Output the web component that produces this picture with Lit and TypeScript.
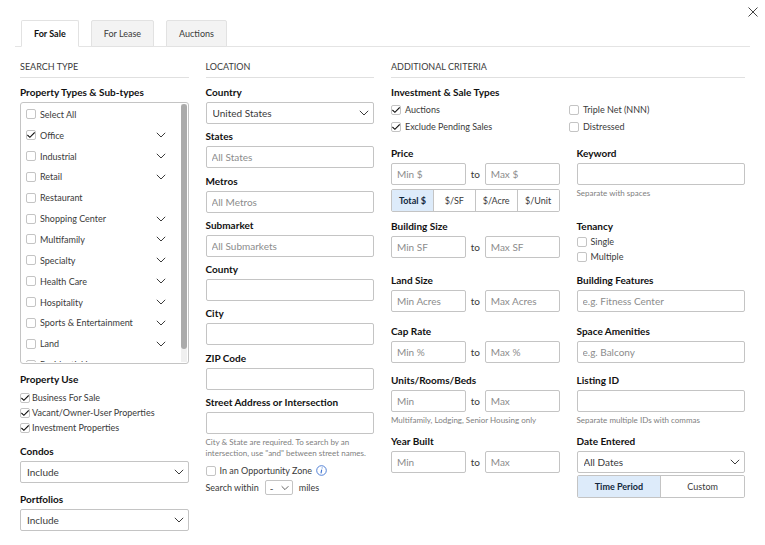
import { LitElement, html, css, svg, nothing } from "lit";
import { customElement, property } from "lit/decorators.js";

const base = css`
  * { box-sizing: border-box; }
  input, select, button { font: inherit; color: inherit; margin: 0; }
  .label { display: block; font-size: 10px; font-weight: 700; color: #111; line-height: 16px; }
  .help { margin: 0; padding-top: 1px; font-size: 8px; line-height: 11px; color: #808080; white-space: pre-line; }
  .control {
    display: block; width: 100%; min-width: 0; height: 22px; padding: 0 5px; font-size: 10px;
    border: 1px solid #c4c4c4; border-radius: 2px; background: #fff; outline: none;
  }
  .control::placeholder { color: #8c8c8c; opacity: 1; }
  .stack { display: flex; flex-direction: column; gap: 2px; }
`;

const chevron = (width = 10) => html`<svg class="chevron" width=${width} height="6" viewBox="0 0 10 6" fill="none"
  stroke="#3c3c3c" stroke-width="1" aria-hidden="true">${svg`<path d="M0.8 0.8L5 5L9.2 0.8" />`}</svg>`;

@customElement("check-box")
export class CheckBox extends LitElement {
  @property() label = "";
  @property({ type: Boolean }) checked = false;
  @property({ type: Boolean, reflect: true }) tight = false;
  static styles = [base, css`
    :host { display: block; min-width: 0; }
    .row { display: flex; align-items: center; gap: 4px; white-space: nowrap; line-height: 15px; }
    :host([tight]) .row { gap: 2px; }
    .box {
      appearance: none; flex: none; width: 10px; height: 10px;
      border: 1px solid #c4c4c4; border-radius: 2px; background: #fff;
    }
    .box:checked {
      background: #fff url("data:image/svg+xml,%3Csvg xmlns='http://www.w3.org/2000/svg' viewBox='0 0 8 8'%3E%3Cpath d='M0.4 4L2.9 6.3L7.7 1.4' fill='none' stroke='%23111' stroke-width='1.1'/%3E%3C/svg%3E") center / 8px 8px no-repeat;
    }
  `];
  render() {
    return html`<label class="row"><input class="box" type="checkbox" .checked=${this.checked} />${this.label}</label>`;
  }
}

@customElement("text-field")
export class TextField extends LitElement {
  @property() label = "";
  @property() hint = "";
  @property() help = "";
  static styles = [base, css`:host { display: block; }`];
  render() {
    return html`<div class="stack">
      <label class="label" for="f">${this.label}</label>
      <input class="control" id="f" type="text" placeholder=${this.hint} />
      ${this.help ? html`<p class="help">${this.help}</p>` : nothing}
    </div>`;
  }
}

@customElement("select-field")
export class SelectField extends LitElement {
  @property() label = "";
  @property() value = "";
  static styles = [base, css`
    :host { display: block; }
    .wrap { position: relative; }
    .control { appearance: none; padding: 0 20px 0 6px; }
    .chevron { position: absolute; right: 5px; top: 8px; pointer-events: none; }
  `];
  render() {
    return html`<div class="stack">
      <label class="label" for="f">${this.label}</label>
      <div class="wrap">
        <select class="control" id="f"><option>${this.value}</option></select>${chevron()}
      </div>
    </div>`;
  }
}

@customElement("range-field")
export class RangeField extends LitElement {
  @property() label = "";
  @property() unit = "";
  @property() help = "";
  static styles = [base, css`
    :host { display: block; }
    .pair { display: grid; grid-template-columns: 1fr 19px 1fr; align-items: center; }
    .to { text-align: center; font-size: 10px; }
  `];
  render() {
    const min = `Min ${this.unit}`.trim();
    const max = `Max ${this.unit}`.trim();
    return html`<div class="stack" role="group" aria-labelledby="l">
      <span class="label" id="l">${this.label}</span>
      <div class="pair">
        <input class="control" type="text" aria-label="${this.label} minimum" placeholder=${min} />
        <span class="to">to</span>
        <input class="control" type="text" aria-label="${this.label} maximum" placeholder=${max} />
      </div>
      ${this.help ? html`<p class="help">${this.help}</p>` : nothing}
    </div>`;
  }
}

@customElement("segment-bar")
export class SegmentBar extends LitElement {
  @property({ attribute: false }) items: string[] = [];
  static styles = [base, css`
    :host { display: block; }
    .bar { display: flex; height: 23px; border: 1px solid #c4c4c4; border-radius: 2px; overflow: hidden; }
    .seg { flex: 1 1 0; min-width: 0; padding: 0; border: 0; background: #fff; }
    .seg + .seg { border-left: 1px solid #c4c4c4; }
    .on { background: #ddebfa; font-weight: 700; color: #12283c; }
  `];
  render() {
    return html`<div class="bar">${this.items.map((t, i) =>
      html`<button type="button" class="seg ${i === 0 ? "on" : ""}" aria-pressed=${i === 0}>${t}</button>`)}</div>`;
  }
}

const propertyTypes: { name: string; leaf?: boolean; on?: boolean }[] = [
  { name: "Select All", leaf: true },
  { name: "Office", on: true },
  { name: "Industrial" },
  { name: "Retail" },
  { name: "Restaurant", leaf: true },
  { name: "Shopping Center" },
  { name: "Multifamily" },
  { name: "Specialty" },
  { name: "Health Care" },
  { name: "Hospitality" },
  { name: "Sports & Entertainment" },
  { name: "Land" },
  { name: "Residential Income", leaf: true },
];

@customElement("app-root")
export class AppRoot extends LitElement {
  static styles = [base, css`
    :host {
      display: block; background: #fff; color: #3a3a3a;
      font-family: Lato, "Liberation Sans", sans-serif; font-size: 9px; line-height: 15px;
    }
    .page { position: relative; padding: 20px 15px 12px; }
    .close { position: absolute; top: 6px; right: 6px; padding: 0; border: 0; background: none; }
    .close svg { display: block; }
    .tabs { display: flex; gap: 12px; padding-left: 6px; border-bottom: 1px solid #e4e4e4; }
    .tab {
      height: 27px; margin-bottom: -1px; padding: 0 12px; border: 1px solid #e2e2e2;
      border-radius: 2px 2px 0 0; background: #f3f3f3;
    }
    .tab.on { background: #fff; border-bottom-color: #fff; font-weight: 700; color: #111; }
    .cols { display: grid; grid-template-columns: repeat(4, minmax(0, 1fr)); column-gap: 17px; padding: 11px 5px 0; }
    .wide { grid-column: span 2; }
    .title {
      margin: 0 0 6px; height: 20px; border-bottom: 1px solid #e0e0e0;
      font-size: 9px; font-weight: 400; line-height: 17px;
    }
    .types { display: flex; height: 262px; padding: 1px; border: 1px solid #c4c4c4; border-radius: 3px; }
    .scroll { flex: 1; min-width: 0; overflow: hidden; }
    .list {
      display: grid; grid-template-rows: repeat(13, minmax(0, 1fr)); height: 271px;
      margin: 0; padding: 0 0 0 4px; list-style: none;
    }
    .item { display: flex; align-items: center; justify-content: space-between; padding-right: 15px; }
    .expand { display: flex; padding: 2px 0; border: 0; background: none; }
    .rail { width: 6px; background: #f0f0f0; }
    .thumb { height: 95%; border-radius: 3px; background: #ababab; }
    .use { display: grid; padding-top: 7px; }
    .use .label { padding-bottom: 3px; line-height: 16px; }
    .gap { margin-top: 8px; }
    .places { display: grid; grid-auto-rows: 1fr; min-height: 310px; }
    .zone { display: flex; align-items: center; gap: 4px; padding-top: 4px; }
    .info { display: flex; padding: 0; border: 0; background: none; }
    .within { display: flex; align-items: center; gap: 6px; padding-top: 2px; }
    .mini { position: relative; }
    .mini .control { appearance: none; width: 28px; height: 15px; padding: 0 4px; }
    .mini .chevron { position: absolute; right: 4px; top: 5px; pointer-events: none; }
    .checks { display: grid; grid-template-columns: 1fr 176px; row-gap: 2px; padding-top: 2px; }
    .criteria {
      display: grid; grid-template-columns: repeat(2, minmax(0, 1fr)); gap: 7px 17px; padding-top: 11px;
      grid-template-rows: 66px 47px 44px 42px 54px auto;
    }
    .price { display: flex; flex-direction: column; gap: 4px; }
    .dates { display: flex; flex-direction: column; gap: 2px; }
  `];

  render() {
    return html`<main class="page">
      <button class="close" type="button" aria-label="Close">
        <svg width="12" height="12" viewBox="0 0 12 12" fill="none" stroke="#444" stroke-width="1"><path d="M1.5 1.5L10.5 10.5M10.5 1.5L1.5 10.5" /></svg>
      </button>
      <nav class="tabs">
        <button class="tab on" type="button">For Sale</button>
        <button class="tab" type="button">For Lease</button>
        <button class="tab" type="button">Auctions</button>
      </nav>
      <div class="cols">
        <section>
          <h2 class="title">SEARCH TYPE</h2>
          <div class="stack">
            <span class="label">Property Types &amp; Sub-types</span>
            <div class="types">
              <div class="scroll">
                <ul class="list">
                  ${propertyTypes.map((t) => html`<li class="item">
                    <check-box label=${t.name} ?checked=${t.on}></check-box>
                    ${t.leaf ? nothing : html`<button class="expand" type="button" aria-label="Expand ${t.name}">${chevron()}</button>`}
                  </li>`)}
                </ul>
              </div>
              <div class="rail"><div class="thumb"></div></div>
            </div>
          </div>
          <div class="use" role="group" aria-label="Property Use">
            <span class="label">Property Use</span>
            <check-box tight checked label="Business For Sale"></check-box>
            <check-box tight checked label="Vacant/Owner-User Properties"></check-box>
            <check-box tight checked label="Investment Properties"></check-box>
          </div>
          <select-field class="gap" label="Condos" value="Include"></select-field>
          <select-field class="gap" label="Portfolios" value="Include"></select-field>
        </section>
        <section>
          <h2 class="title">LOCATION</h2>
          <div class="places">
            <select-field label="Country" value="United States"></select-field>
            <text-field label="States" hint="All States"></text-field>
            <text-field label="Metros" hint="All Metros"></text-field>
            <text-field label="Submarket" hint="All Submarkets"></text-field>
            <text-field label="County"></text-field>
            <text-field label="City"></text-field>
            <text-field label="ZIP Code"></text-field>
          </div>
          <text-field label="Street Address or Intersection"
            help=${'City & State are required. To search by an\nintersection, use "and" between street names.'}></text-field>
          <div class="zone">
            <check-box label="In an Opportunity Zone"></check-box>
            <button class="info" type="button" aria-label="About opportunity zones">
              <svg width="11" height="11" viewBox="0 0 11 11" fill="none" stroke="#3f74d1"><circle cx="5.5" cy="5.5" r="4.8" stroke-width="0.9" /><path d="M6.2 2.5L6 3.4M5.7 4.6L5 8.3" stroke-width="1.1" /></svg>
            </button>
          </div>
          <div class="within">
            <label for="miles">Search within</label>
            <div class="mini"><select class="control" id="miles"><option>-</option></select>${chevron(8)}</div>
            <span>miles</span>
          </div>
        </section>
        <section class="wide">
          <h2 class="title">ADDITIONAL CRITERIA</h2>
          <span class="label">Investment &amp; Sale Types</span>
          <div class="checks">
            <check-box checked label="Auctions"></check-box>
            <check-box label="Triple Net (NNN)"></check-box>
            <check-box checked label="Exclude Pending Sales"></check-box>
            <check-box label="Distressed"></check-box>
          </div>
          <div class="criteria">
            <div class="price">
              <range-field label="Price" unit="$"></range-field>
              <segment-bar .items=${["Total $", "$/SF", "$/Acre", "$/Unit"]}></segment-bar>
            </div>
            <text-field label="Keyword" help="Separate with spaces"></text-field>
            <range-field label="Building Size" unit="SF"></range-field>
            <div role="group" aria-label="Tenancy">
              <span class="label">Tenancy</span>
              <check-box label="Single"></check-box>
              <check-box label="Multiple"></check-box>
            </div>
            <range-field label="Land Size" unit="Acres"></range-field>
            <text-field label="Building Features" hint="e.g. Fitness Center"></text-field>
            <range-field label="Cap Rate" unit="%"></range-field>
            <text-field label="Space Amenities" hint="e.g. Balcony"></text-field>
            <range-field label="Units/Rooms/Beds" help="Multifamily, Lodging, Senior Housing only"></range-field>
            <text-field label="Listing ID" help="Separate multiple IDs with commas"></text-field>
            <range-field label="Year Built"></range-field>
            <div class="dates">
              <select-field label="Date Entered" value="All Dates"></select-field>
              <segment-bar .items=${["Time Period", "Custom"]}></segment-bar>
            </div>
          </div>
        </section>
      </div>
    </main>`;
  }
}
